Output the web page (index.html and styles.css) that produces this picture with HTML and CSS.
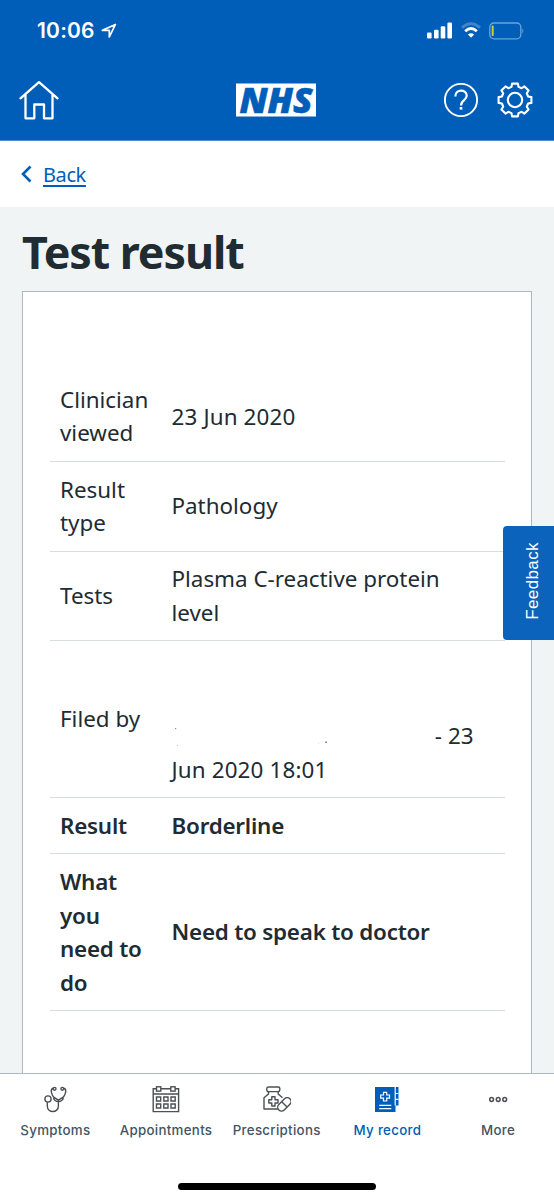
FILE: index.html
```html
<!DOCTYPE html>
<html lang="en">
<head>
<meta charset="utf-8">
<title>Test result</title>
<link rel="stylesheet" href="styles.css">
</head>
<body>
<div class="app">
  <header class="header">
    <div class="status">
      <div class="clock">
        <span class="time">10:06</span>
        <svg width="16" height="16" viewBox="0 0 16 16" fill="none" stroke="#fff" stroke-width="1.7" stroke-linejoin="round"><path d="M14.4 1.4 1.4 7.3H8.3V14Z"/></svg>
      </div>
      <div class="signals">
        <svg class="cell" width="26" height="17" viewBox="0 0 26 17" fill="#fff"><rect x="0" y="10.5" width="4.600" height="6" rx="1.2"/><rect x="7" y="7.7" width="4.600" height="8.8" rx="1.2"/><rect x="13.700" y="4.300" width="4.600" height="12.200" rx="1.200"/><rect x="20.400" y="0.500" width="4.600" height="16" rx="1.200"/></svg>
        <svg class="wifi" width="20" height="17" viewBox="0 0 20 17" fill="none" stroke="#fff"><path d="M1 5.600Q10-2.400 19 5.600" stroke-width="2.800" opacity=".25"/><path d="M4.200 9.200Q10 3.900 15.800 9.200" stroke-width="2.900"/><path d="M10 15.800 6.900 12.600Q10 10.100 13.100 12.600Z" fill="#fff" stroke="none"/></svg>
        <svg width="36" height="18" viewBox="0 0 36 18"><rect x=".8" y="1" width="31" height="15.800" rx="4" fill="none" stroke="#6ba3d8" stroke-width="1.300"/><rect x="2.700" y="3.500" width="2" height="10.500" rx=".8" fill="#c5cf3e"/><path d="M33.400 6.200Q35.300 8.900 33.400 11.600Z" fill="#6ba3d8"/></svg>
      </div>
    </div>
    <div class="bar">
      <svg class="home" width="40" height="40" viewBox="0 0 40 40" fill="none" stroke="#fff" stroke-width="2.300" stroke-linecap="round" stroke-linejoin="round"><path d="M1.500 18.300 20 2.200 38.500 18.300M6.500 14.300V38.300H15.300V24.500H25V38.300H33.500V14.300"/></svg>
      <div class="logo"><svg class="logo-mark" width="80" height="50" viewBox="0 -8.500 80 50"><rect width="80" height="33" fill="#fff"/><text class="logo-text" x="3.500" y="29.300" textLength="73" lengthAdjust="spacingAndGlyphs">NHS</text></svg></div>
      <div class="actions">
        <svg width="36" height="36" viewBox="0 0 36 36" fill="none" stroke="#fff" stroke-width="1.900"><circle cx="18" cy="18" r="16.100"/><path d="M12.300 14.500C12.300 6.800 23.700 7 23.700 13.800 23.700 18.300 18 18 18 23.600" stroke-width="2.200"/><rect x="16.700" y="25" width="2.600" height="2.600" fill="#fff" stroke="none"/></svg>
        <svg width="36" height="36" viewBox="-18 -18 36 36" fill="none" stroke="#fff" stroke-width="2.100" stroke-linejoin="round"><circle r="7.200"/><path d="M-3.500-13.100-2.900-16.400H2.900L3.500-13.100 6.700-11.800 9.500-13.600 13.600-9.500 11.800-6.700 13.100-3.500 16.400-2.900V2.900L13.100 3.500 11.800 6.700 13.600 9.500 9.500 13.600 6.700 11.800 3.500 13.100 2.900 16.400H-2.900L-3.500 13.100-6.700 11.800-9.500 13.600-13.600 9.500-11.800 6.700-13.100 3.500-16.400 2.900V-2.900L-13.100-3.500-11.800-6.700-13.600-9.500-9.500-13.600-6.700-11.800Z"/></svg>
      </div>
    </div>
  </header>
  <nav class="back">
    <svg width="11" height="18" viewBox="0 0 11 18" fill="none" stroke="#005eb8" stroke-width="2.600"><path d="M9.500 1.500 2 9 9.500 16.500"/></svg>
    <a class="back-link" href="#">Back</a>
  </nav>
  <main class="content">
    <h1 class="title">Test result</h1>
    <section class="card">
      <table class="results">
        <tr><th>Clinician viewed</th><td><span class="date">23 Jun 2020</span></td></tr>
        <tr><th>Result type</th><td>Pathology</td></tr>
        <tr><th>Tests</th><td>Plasma C-reactive protein level</td></tr>
        <tr>
          <th>Filed by</th>
          <td>
            <div class="filed">
              <svg class="marks" width="160" height="20" viewBox="0 0 160 20" fill="#8b9196"><rect x="3" y="1" width="1.200" height="1.200"/><rect x="5" y="18" width="1" height="1" opacity=".5"/><rect x="146" y="15.500" width="1.200" height="1" opacity=".3"/><rect x="153" y="14.500" width="2" height="1.500"/></svg>
              <span class="day">- 23</span>
            </div>
            <span class="date">Jun 2020 18:01</span>
          </td>
        </tr>
        <tr class="strong"><th>Result</th><td>Borderline</td></tr>
        <tr class="strong"><th>What you need to do</th><td>Need to speak to doctor</td></tr>
      </table>
    </section>
  </main>
  <nav class="tabs">
    <a class="tab"><svg width="28" height="28" viewBox="0 0 28 28" fill="none" stroke="#4c5054" stroke-width="1.400"><circle cx="7" cy="13" r="3.100"/><circle cx="13.600" cy="2.800" r="1.400"/><circle cx="21.300" cy="2.800" r="1.400"/><path d="M12.200 2.300C9 3 10.100 9 13.500 11.700L17.400 14.200 21.400 11.700C25 9 26 3 22.800 2.300M12.400 11.600C13.700 16.800 21.100 16.800 22.500 11.600M6.300 16.200V20C6.300 27.300 17.400 27.300 17.400 20V15.500"/></svg><span>Symptoms</span></a>
    <a class="tab"><svg width="28" height="28" viewBox="0 0 28 28" fill="none" stroke="#4c5054" stroke-width="1.400"><path d="M4.500 2.800H1.200V25.600H26.600V2.800H23.200M8.800 2.800H18.800M1.200 8H26.600"/><rect x="4.500" y=".8" width="4.300" height="4.300"/><rect x="18.800" y=".8" width="4.300" height="4.300"/><path d="M4.500 11H8.700V15H4.500ZM11.800 11H16V15H11.800ZM19 11H23.200V15H19ZM4.500 18H8.700V22H4.500ZM11.800 18H16V22H11.800ZM19 18H23.200V22H19Z"/></svg><span>Appointments</span></a>
    <a class="tab"><svg width="28" height="28" viewBox="0 0 28 28" fill="none" stroke="#4c5054" stroke-width="1.400" stroke-linejoin="round"><rect x="3.800" y="1" width="13" height="4.600" rx="1.500"/><path d="M5.500 5.800V8L1 11.800V23H15M15.200 5.800V8L19.500 11.800M8.800 10.800H12V13.800H15V17H12V20H8.800V17H5.800V13.800H8.800Z"/><g transform="rotate(-45 21.300 18.300)"><rect x="13.500" y="14.600" width="15.600" height="7.600" rx="3.800" fill="#fff"/><path d="M21.300 14.600V22.200"/></g></svg><span>Prescriptions</span></a>
    <a class="tab active"><svg width="28" height="28" viewBox="0 0 28 28"><path d="M2 1H25.500V19.500H22.500V26H2Z" fill="#005eb8"/><path d="M22.200 1V19.500M22 7.500H25.500M22 13.300H25.500M6.200 19.300H18.300M6.200 22.600H18.300M10.500 6.300H13.700V9H16.500V12.200H13.700V15H10.500V12.200H7.700V9H10.500Z" fill="none" stroke="#fff" stroke-width="1.200"/></svg><span>My record</span></a>
    <a class="tab"><svg width="28" height="28" viewBox="0 0 28 28" fill="none" stroke="#4c5054" stroke-width="1.500"><circle cx="7.600" cy="13.500" r="1.900"/><circle cx="14.200" cy="13.500" r="1.900"/><circle cx="20.700" cy="13.500" r="1.900"/></svg><span>More</span></a>
  </nav>
  <footer class="home-area"><div class="home-indicator"></div></footer>
  <button class="feedback"><span class="feedback-label">Feedback</span></button>
</div>
</body>
</html>
```
FILE: styles.css
```css
* { box-sizing: border-box; }
body { margin: 0; font-family: "Noto Sans", sans-serif; color: #212b32; background: #fff; }
svg { display: block; flex: none; }
.app { position: relative; width: 554px; height: 1200px; display: flex; flex-direction: column; overflow: hidden; }
.header { height: 141px; flex: none; background: #005eb8; border-bottom: 1px solid #4c8fd0; }
.status { height: 60px; padding: 1px 29px 0 37px; display: flex; align-items: center; justify-content: space-between; }
.clock { display: flex; align-items: center; gap: 6px; color: #fff; font: 600 21px/30px Inter, sans-serif; letter-spacing: .2px; }
.signals { display: flex; align-items: center; gap: 8px; }
.bar { height: 80px; padding: 0 21px 0 19px; display: grid; grid-template-columns: 1fr auto 1fr; align-items: center; }
.logo-text { font: italic 900 36px/1 "Noto Sans", sans-serif; fill: #005eb8; stroke: #005eb8; stroke-width: .6px; }
.actions { justify-self: end; display: flex; gap: 18px; }
.back { height: 65.500px; flex: none; padding: 0 21px; display: flex; align-items: center; gap: 11px; background: #fff; }
.back-link { margin-top: 2px; color: #005eb8; font-size: 20px; line-height: 30px; letter-spacing: -.4px; text-decoration-thickness: 1.500px; text-underline-offset: 3px; }
.content { flex: 1; min-height: 0; overflow: hidden; padding: 18px 22px 0; background: #f0f4f5; }
.title { margin: 0 0 12.500px; font-size: 44.800px; line-height: 54px; font-weight: 700; letter-spacing: -1.050px; }
.card { width: 510px; height: 850px; padding: 80px 27px 0 26.500px; background: #fff; border: 1.500px solid #aeb7c0; }
.results { width: 455px; border-collapse: collapse; table-layout: fixed; font-size: 22.400px; line-height: 33.500px; }
.results th { width: 111px; padding: 10.900px 10px 10.900px 10.500px; text-align: left; font-weight: 400; }
.results td { padding: 10.900px 20px 10.900px 11px; }
.results tr { border-bottom: 1px solid #d8dde0; }
.results .strong th, .results .strong td { font-weight: 600; letter-spacing: -.22px; }
.date { letter-spacing: .15px; }
.filed { margin-top: 66.800px; display: flex; justify-content: space-between; padding-right: 11px; }
.marks { margin-top: 8px; }
.tabs { height: 75px; flex: none; padding: 12px 0 0; display: grid; grid-template-columns: repeat(5, 110.700px); border-top: 1.500px solid #aeb7c0; background: #fff; }
.tab { display: flex; flex-direction: column; align-items: center; gap: 6.500px; color: #425563; font: 500 13.300px/18px Inter, sans-serif; letter-spacing: .3px; }
.tab.active { color: #005eb8; }
.home-area { height: 52px; flex: none; display: flex; justify-content: center; align-items: flex-start; padding-top: 35px; background: #fff; }
.home-indicator { width: 198px; height: 7px; border-radius: 4px; background: #000; }
.feedback { position: absolute; right: 0; top: 526px; width: 51px; height: 114px; padding: 0 0 4px 8px; border: 0; border-radius: 4px 0 0 4px; background: #0b63bb; color: #fff; display: flex; align-items: center; justify-content: center; font: 17px "Liberation Sans", sans-serif; }
.feedback-label { writing-mode: vertical-rl; transform: rotate(180deg); letter-spacing: .4px; }
```
